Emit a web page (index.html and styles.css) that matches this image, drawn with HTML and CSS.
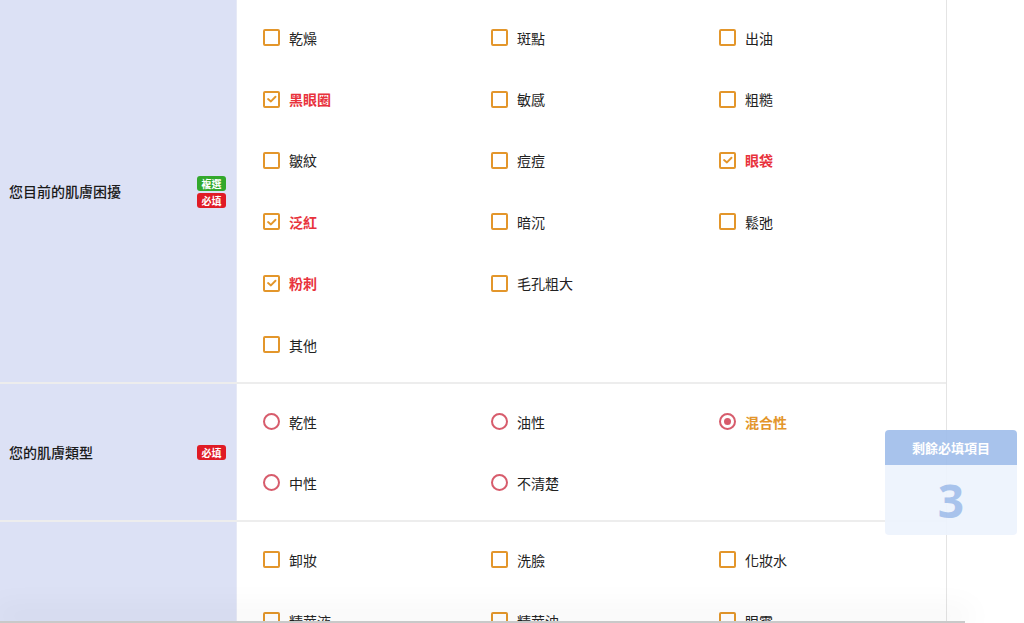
FILE: index.html
```html
<!DOCTYPE html>
<html lang="zh-Hant">
<head>
<meta charset="utf-8">
<title>肌膚問卷</title>
<link rel="stylesheet" href="styles.css">
</head>
<body>
<div class="form">
  <div class="row row-first">
    <div class="row-label">
      <span class="label-text">您目前的肌膚困擾</span>
      <span class="badges"><span class="badge badge-multi">複選</span><span class="badge badge-req">必填</span></span>
    </div>
    <div class="options">
      <label class="opt"><span class="box"></span>乾燥</label>
      <label class="opt"><span class="box"></span>斑點</label>
      <label class="opt"><span class="box"></span>出油</label>
      <label class="opt checked"><span class="box"><svg viewBox="0 0 16 16" class="tick"><polyline points="3.5,8 6.8,10.8 12,5.4"/></svg></span>黑眼圈</label>
      <label class="opt"><span class="box"></span>敏感</label>
      <label class="opt"><span class="box"></span>粗糙</label>
      <label class="opt"><span class="box"></span>皺紋</label>
      <label class="opt"><span class="box"></span>痘痘</label>
      <label class="opt checked"><span class="box"><svg viewBox="0 0 16 16" class="tick"><polyline points="3.5,8 6.8,10.8 12,5.4"/></svg></span>眼袋</label>
      <label class="opt checked"><span class="box"><svg viewBox="0 0 16 16" class="tick"><polyline points="3.5,8 6.8,10.8 12,5.4"/></svg></span>泛紅</label>
      <label class="opt"><span class="box"></span>暗沉</label>
      <label class="opt"><span class="box"></span>鬆弛</label>
      <label class="opt checked"><span class="box"><svg viewBox="0 0 16 16" class="tick"><polyline points="3.5,8 6.8,10.8 12,5.4"/></svg></span>粉刺</label>
      <label class="opt"><span class="box"></span>毛孔粗大</label>
      <span class="opt-empty"></span>
      <label class="opt"><span class="box"></span>其他</label>
    </div>
  </div>
  <div class="row">
    <div class="row-label">
      <span class="label-text">您的肌膚類型</span>
      <span class="badges"><span class="badge badge-req">必填</span></span>
    </div>
    <div class="options">
      <label class="opt"><span class="radio"></span>乾性</label>
      <label class="opt"><span class="radio"></span>油性</label>
      <label class="opt radio-checked"><span class="radio"><span class="dot"></span></span>混合性</label>
      <label class="opt"><span class="radio"></span>中性</label>
      <label class="opt"><span class="radio"></span>不清楚</label>
    </div>
  </div>
  <div class="row">
    <div class="row-label"></div>
    <div class="options">
      <label class="opt"><span class="box"></span>卸妝</label>
      <label class="opt"><span class="box"></span>洗臉</label>
      <label class="opt"><span class="box"></span>化妝水</label>
      <label class="opt"><span class="box"></span>精華液</label>
      <label class="opt"><span class="box"></span>精華油</label>
      <label class="opt"><span class="box"></span>眼霜</label>
    </div>
  </div>
</div>

<div class="remain">
  <div class="remain-head">剩餘必填項目</div>
  <div class="remain-num">3</div>
</div>

<div class="bottom-edge"></div>
</body>
</html>
```

FILE: styles.css
```css
html, body {
  margin: 0;
  padding: 0;
  background: #ffffff;
  overflow: hidden;
}

body {
  font-family: "Noto Sans CJK TC", "Noto Sans", sans-serif;
  font-size: 14px;
  color: #222222;
  height: 623px;
}

.form {
  width: 946px;
  border-right: 1px solid #e4e4e4;
  min-height: 623px;
}

.row {
  display: grid;
  grid-template-columns: 237px 1fr;
  border-bottom: 2px solid #ededed;
}

.row-label {
  background: #dce1f5;
  display: flex;
  align-items: center;
  justify-content: space-between;
  padding: 0 10px 0 9px;
  border-right: 1px solid #e6e9f6;
}

.label-text {
  font-size: 14px;
  font-weight: 500;
  color: #1a1a1a;
}

.badges {
  display: flex;
  flex-direction: column;
  gap: 2px;
  padding-top: 1px;
}

.badge {
  display: block;
  width: 29px;
  height: 15px;
  line-height: 15px;
  border-radius: 3px;
  font-size: 10px;
  font-weight: 700;
  color: #ffffff;
  text-align: center;
}

.badge-multi { background: #33a82c; }
.badge-req { background: #e01b25; }

.options {
  display: grid;
  grid-template-columns: 228px 228px 228px;
  padding: 7px 0 7px 26px;
}

.row-first .options {
  padding-top: 7px;
  padding-bottom: 7px;
}

.opt {
  height: 61px;
  display: flex;
  align-items: center;
  gap: 9px;
  font-size: 14px;
  color: #222222;
}

.row-first .opt {
  height: 61.4px;
}

.box {
  width: 17px;
  height: 17px;
  box-sizing: border-box;
  border: 2.5px solid #e3962b;
  border-radius: 2px;
  display: flex;
  align-items: center;
  justify-content: center;
  flex: none;
}

.tick {
  width: 14px;
  height: 14px;
  flex: none;
}

.tick polyline {
  fill: none;
  stroke: #e3962b;
  stroke-width: 2.2;
  stroke-linecap: round;
  stroke-linejoin: round;
}

.checked {
  color: #e8323c;
  font-weight: 700;
}

.radio {
  width: 17px;
  height: 17px;
  box-sizing: border-box;
  border: 2px solid #d75c6c;
  border-radius: 50%;
  display: flex;
  align-items: center;
  justify-content: center;
  flex: none;
}

.dot {
  width: 7px;
  height: 7px;
  border-radius: 50%;
  background: #d75c6c;
}

.radio-checked {
  color: #e3962b;
  font-weight: 700;
}

.remain {
  position: fixed;
  top: 430px;
  right: 7px;
  width: 132px;
  height: 105px;
  border-radius: 4px;
  overflow: hidden;
  opacity: 0.9;
  display: flex;
  flex-direction: column;
}

.remain-head {
  height: 35px;
  line-height: 35px;
  background: #9fbdea;
  color: #ffffff;
  font-weight: 700;
  font-size: 13px;
  text-align: center;
}

.remain-num {
  flex: 1;
  background: #edf3fd;
  color: #9fbdea;
  font-family: "Open Sans", "Noto Sans", sans-serif;
  font-size: 46px;
  font-weight: 700;
  display: flex;
  align-items: center;
  justify-content: center;
}

.bottom-edge {
  position: fixed;
  left: 0;
  bottom: 0;
  width: 965px;
  height: 2px;
  background: #c9c9c9;
  box-shadow: 0 -6px 30px 6px rgba(0, 0, 0, 0.06);
}
```
